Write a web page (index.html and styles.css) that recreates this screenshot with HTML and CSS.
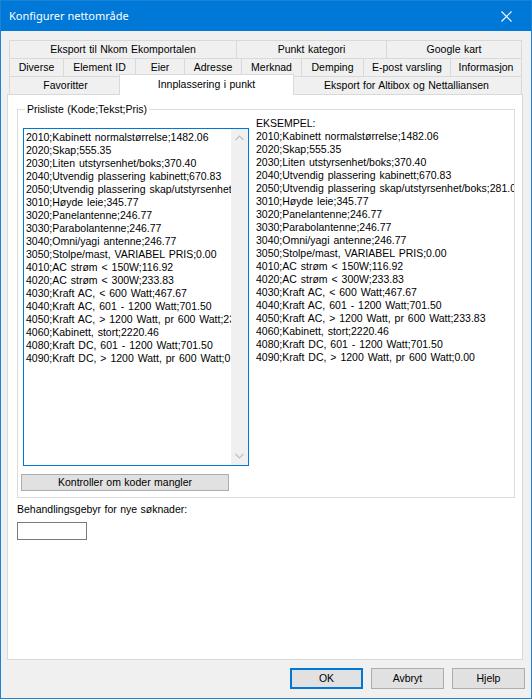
FILE: index.html
```html
<!DOCTYPE html>
<html>
<head>
<meta charset="utf-8">
<link rel="stylesheet" href="styles.css">
</head>
<body>
<div class="window">
  <div class="titlebar">
    <span class="title">Konfigurer nettområde</span>
    <svg class="close" width="11" height="11" viewBox="0 0 11 11"><path d="M0.5 0.5 L10.5 10.5 M10.5 0.5 L0.5 10.5" stroke="#fff" stroke-width="1.1" fill="none"/></svg>
  </div>
  <div class="tabs">
    <div class="tabrow">
      <div class="tab w228">Eksport til Nkom Ekomportalen</div>
      <div class="tab w151">Punkt kategori</div>
      <div class="tab w136">Google kart</div>
    </div>
    <div class="tabrow">
      <div class="tab w55">Diverse</div>
      <div class="tab w73">Element ID</div>
      <div class="tab w50">Eier</div>
      <div class="tab w58">Adresse</div>
      <div class="tab w61">Merknad</div>
      <div class="tab w63">Demping</div>
      <div class="tab w88">E-post varsling</div>
      <div class="tab w72">Informasjon</div>
    </div>
    <div class="tabrow">
      <div class="tab w113">Favoritter</div>
      <div class="tab selected">Innplassering i punkt</div>
      <div class="tab after-sel">Eksport for Altibox og Nettalliansen</div>
    </div>
  </div>
  <div class="panel">
    <fieldset class="group">
      <legend>Prisliste (Kode;Tekst;Pris)</legend>
      <div class="group-body">
        <div class="left-col">
          <div class="listbox">
            <div class="listtext">2010;Kabinett normalstørrelse;1482.06
2020;Skap;555.35
2030;Liten utstyrsenhet/boks;370.40
2040;Utvendig plassering kabinett;670.83
2050;Utvendig plassering skap/utstyrsenhet/boks;281.03
3010;Høyde leie;345.77
3020;Panelantenne;246.77
3030;Parabolantenne;246.77
3040;Omni/yagi antenne;246.77
3050;Stolpe/mast, VARIABEL PRIS;0.00
4010;AC strøm &lt; 150W;116.92
4020;AC strøm &lt; 300W;233.83
4030;Kraft AC, &lt; 600 Watt;467.67
4040;Kraft AC, 601 - 1200 Watt;701.50
4050;Kraft AC, &gt; 1200 Watt, pr 600 Watt;233.83
4060;Kabinett, stort;2220.46
4080;Kraft DC, 601 - 1200 Watt;701.50
4090;Kraft DC, &gt; 1200 Watt, pr 600 Watt;0.00</div>
            <div class="vscroll">
              <svg width="9" height="6" viewBox="0 0 9 6"><polyline points="0.5,5 4.5,1 8.5,5" stroke="#c0c0c0" stroke-width="1.2" fill="none"/></svg>
              <svg width="9" height="6" viewBox="0 0 9 6"><polyline points="0.5,1 4.5,5 8.5,1" stroke="#c0c0c0" stroke-width="1.2" fill="none"/></svg>
            </div>
          </div>
          <button class="btn btn-check">Kontroller om koder mangler</button>
        </div>
        <div class="example">EKSEMPEL:
2010;Kabinett normalstørrelse;1482.06
2020;Skap;555.35
2030;Liten utstyrsenhet/boks;370.40
2040;Utvendig plassering kabinett;670.83
2050;Utvendig plassering skap/utstyrsenhet/boks;281.03
3010;Høyde leie;345.77
3020;Panelantenne;246.77
3030;Parabolantenne;246.77
3040;Omni/yagi antenne;246.77
3050;Stolpe/mast, VARIABEL PRIS;0.00
4010;AC strøm &lt; 150W;116.92
4020;AC strøm &lt; 300W;233.83
4030;Kraft AC, &lt; 600 Watt;467.67
4040;Kraft AC, 601 - 1200 Watt;701.50
4050;Kraft AC, &gt; 1200 Watt, pr 600 Watt;233.83
4060;Kabinett, stort;2220.46
4080;Kraft DC, 601 - 1200 Watt;701.50
4090;Kraft DC, &gt; 1200 Watt, pr 600 Watt;0.00</div>
      </div>
    </fieldset>
    <div class="fee-label">Behandlingsgebyr for nye søknader:</div>
    <div class="fee-input"></div>
  </div>
  <div class="buttons">
    <button class="btn dlg default">OK</button>
    <button class="btn dlg">Avbryt</button>
    <button class="btn dlg">Hjelp</button>
  </div>
</div>
</body>
</html>
```
FILE: styles.css
```css
html, body {
  margin: 0;
  padding: 0;
  background: #f0f0f0;
}
body {
  font-family: "Liberation Sans", Arial, sans-serif;
  font-size: 10.5px;
  word-spacing: 0.5px;
  color: #000;
}
.window {
  width: 532px;
  height: 699px;
  box-sizing: border-box;
  border: 1px solid #1883d7;
  background: #f0f0f0;
  display: flex;
  flex-direction: column;
}
.titlebar {
  height: 30px;
  flex: none;
  background: #0078d7;
  color: #fff;
  display: flex;
  align-items: center;
  justify-content: space-between;
  padding: 0 19px 0 8px;
}
.title {
  font-family: "Noto Sans", "Open Sans", sans-serif;
  font-size: 11px;
  line-height: 16px;
  word-spacing: 0;
}
.close { display: block; }
.tabs {
  margin: 9px 0 0 8px;
  flex: none;
}
.tabrow {
  display: flex;
  height: 18px;
}
.tab {
  box-sizing: border-box;
  height: 18px;
  border: 1px solid #d9d9d9;
  border-bottom: 0;
  background: #f0f0f0;
  margin-left: -1px;
  display: flex;
  align-items: center;
  justify-content: center;
  white-space: nowrap;
  line-height: 13px;
  padding-bottom: 1px;
}
.tabrow .tab:first-child { margin-left: 0; }
.w228 { width: 228px; }
.w151 { width: 151px; }
.w136 { width: 136px; }
.w55 { width: 55px; }
.w73 { width: 73px; }
.w50 { width: 50px; }
.w58 { width: 58px; }
.w61 { width: 61px; }
.w63 { width: 63px; }
.w88 { width: 88px; }
.w72 { width: 72px; }
.w113 { width: 113px; }
.tab.selected {
  width: 175px;
  height: 21px;
  margin: -2px 0 -1px -3px;
  background: #fff;
  position: relative;
  z-index: 2;
  padding-bottom: 2px;
}
.tab.after-sel {
  width: 231px;
  margin-left: -3px;
}
.panel {
  flex: none;
  box-sizing: border-box;
  margin-left: 6px;
  width: 516px;
  height: 566px;
  border: 1px solid #d9d9d9;
  background: #fff;
  position: relative;
  z-index: 1;
}
.group {
  margin: 8px 0 0 9px;
  padding: 0 0 6px 0;
  width: 498px;
  box-sizing: border-box;
  border: 1px solid #dcdcdc;
  min-width: 0;
}
.group legend {
  margin-left: 7px;
  padding: 0 2px;
  line-height: 13px;
  height: 13px;
}
.group-body {
  display: flex;
  align-items: flex-start;
}
.left-col {
  display: flex;
  flex-direction: column;
  align-items: flex-start;
  padding: 12px 0 0 3px;
  flex: none;
}
.listbox {
  margin-left: 2px;
  width: 226px;
  height: 338px;
  box-sizing: border-box;
  border: 1px solid #0078d7;
  background: #fff;
  display: flex;
}
.listtext {
  flex: 1;
  min-width: 0;
  overflow: hidden;
  white-space: pre;
  line-height: 13px;
  word-spacing: 1px;
  padding: 2px 0 0 2px;
}
.vscroll {
  flex: none;
  width: 17px;
  background: #f0f0f0;
  display: flex;
  flex-direction: column;
  justify-content: space-between;
  align-items: center;
  padding: 6px 0 6px 0;
  box-sizing: border-box;
}
.vscroll svg { display: block; }
.btn {
  font-family: "Liberation Sans", Arial, sans-serif;
  font-size: 10.5px;
  word-spacing: 0.5px;
  color: #000;
  background: #e1e1e1;
  border: 1px solid #adadad;
  box-sizing: border-box;
  padding: 0;
  margin: 0;
  line-height: 13px;
}
.btn-check {
  margin: 8px 0 0 0;
  width: 208px;
  height: 17px;
}
.example {
  flex: 1;
  min-width: 0;
  overflow: hidden;
  white-space: pre;
  line-height: 13px;
  word-spacing: 1px;
  margin-left: 7px;
  padding-top: 1px;
}
.fee-label {
  margin: 5px 0 0 9px;
  line-height: 13px;
}
.fee-input {
  margin: 6px 0 0 9px;
  width: 70px;
  height: 18px;
  box-sizing: border-box;
  border: 1px solid #7a7a7a;
  background: #fff;
}
.buttons {
  flex: none;
  display: flex;
  justify-content: flex-end;
  gap: 8px;
  margin-top: 8px;
  padding-right: 6px;
}
.dlg {
  width: 73px;
  height: 21px;
}
.dlg.default {
  border: 2px solid #0078d7;
}
```
